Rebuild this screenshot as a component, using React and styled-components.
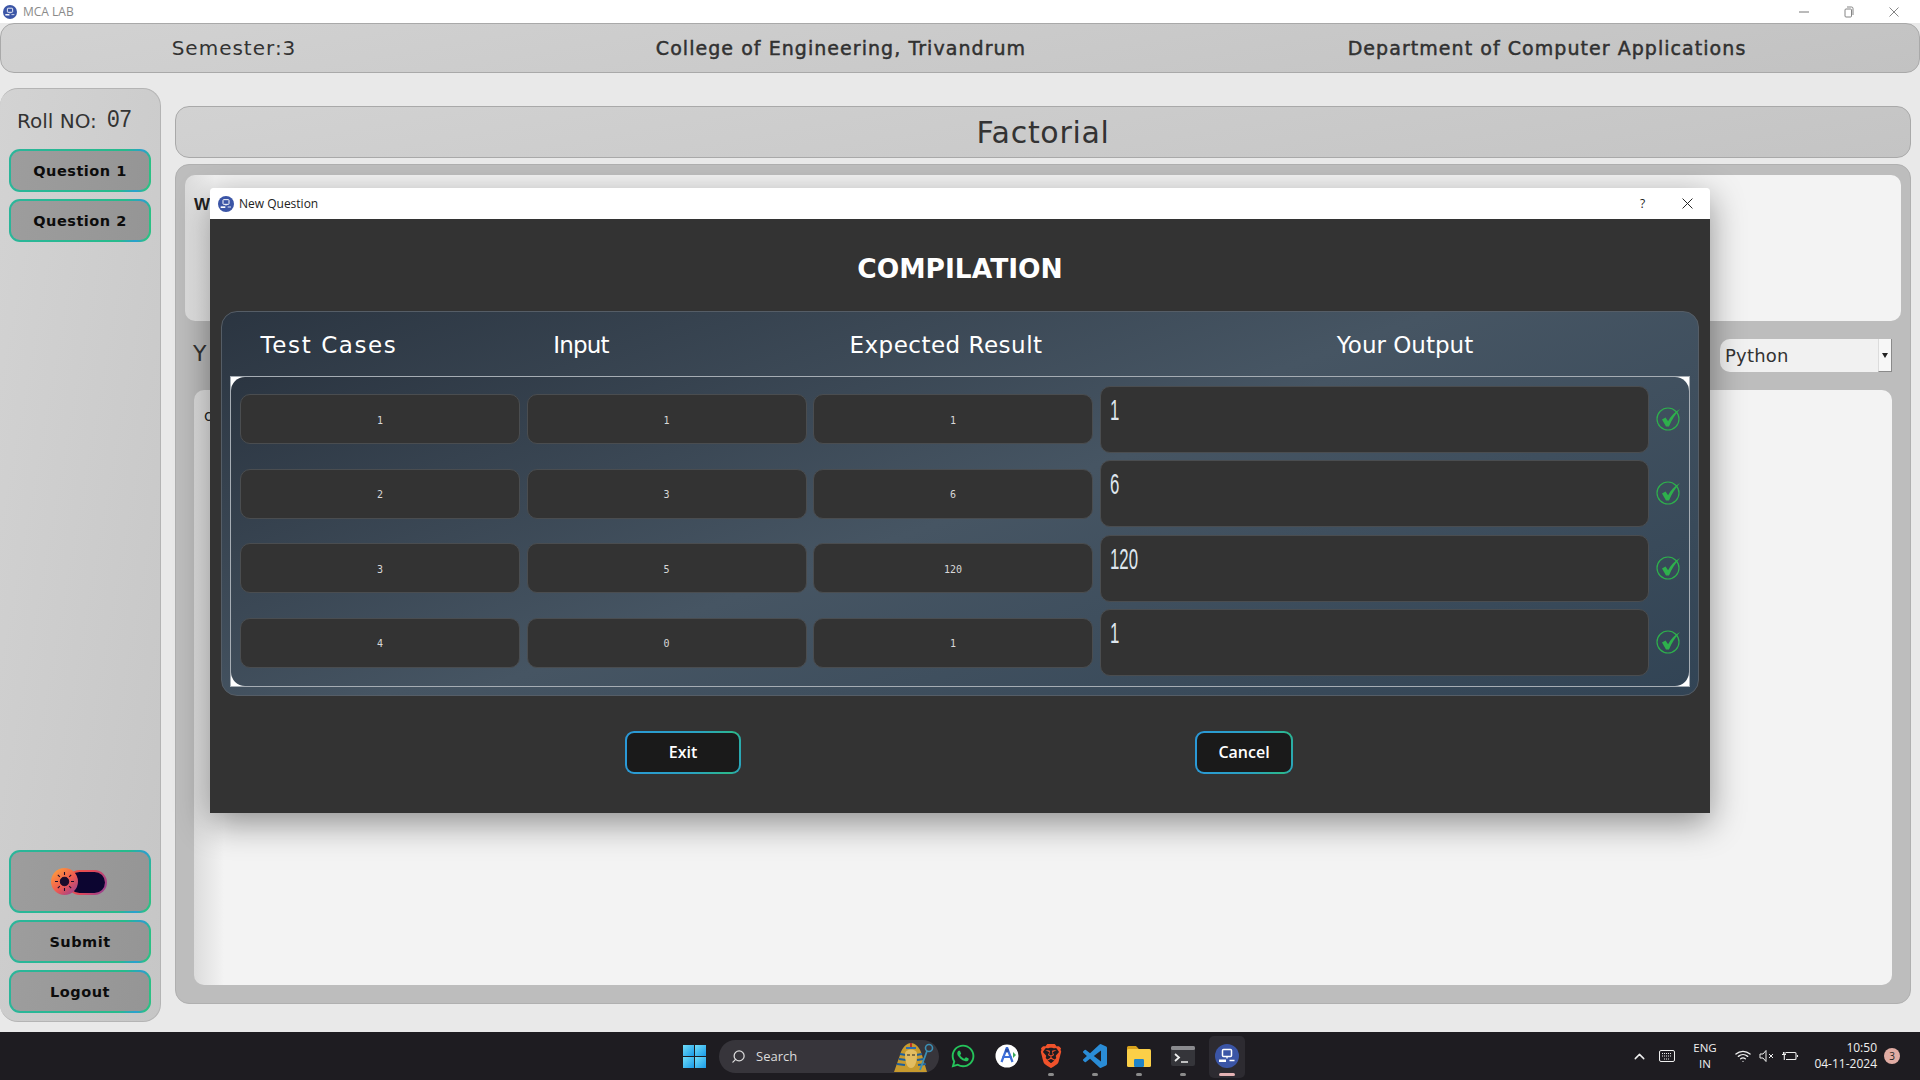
import React from "react";
import styled, { createGlobalStyle } from "styled-components";
import { FaWhatsapp } from "react-icons/fa";
import { SiBrave } from "react-icons/si";
import { FiSearch, FiChevronUp, FiWifi } from "react-icons/fi";

const WIDE = `"DejaVu Sans", "Liberation Sans", sans-serif`;
const UI = `"Open Sans", "Noto Sans", sans-serif`;
const BTN_BORDER = `linear-gradient(100deg, #2bb59a 0%, #27bb8c 78%, #2a9fd0 90%, #2bc084 96%)`;
const BLUE_GRAD = `linear-gradient(160deg, #2b3541 0%, #465563 48%, #324455 100%)`;

const rows = [
  { id: 1, input: 1, expected: 1, output: "1" },
  { id: 2, input: 3, expected: 6, output: "6" },
  { id: 3, input: 5, expected: 120, output: "120" },
  { id: 4, input: 0, expected: 1, output: "1" },
];

const GlobalStyle = createGlobalStyle`
  html, body { margin: 0; padding: 0; background: #e9e9e9; }
  * { box-sizing: border-box; }
`;

const Screen = styled.div`
  position: relative;
  width: 1920px;
  height: 1080px;
  overflow: hidden;
  display: flex;
  flex-direction: column;
  background: #e9e9e9;
  font-family: ${WIDE};
`;

const TitleBar = styled.div`
  height: 23px;
  background: #fff;
  display: flex;
  align-items: center;
  padding-left: 3px;
  font: 12px ${UI};
  color: #8a8a8a;
  gap: 6px;
`;

const WinControls = styled.div`
  margin-left: auto;
  padding-right: 4px;
  display: flex;
  color: #777;
`;

const WinControl = styled.div`
  width: 45px;
  height: 23px;
  display: flex;
  align-items: center;
  justify-content: center;
`;

const Header = styled.div`
  height: 50px;
  display: grid;
  grid-template-columns: 466px 748px 664px;
  align-items: center;
  border: 1px solid #a9a9a9;
  border-radius: 14px;
  background: linear-gradient(170deg, #d2d2d2, #c2c2c2);
  color: #333;
`;

const HeaderText = styled.div`
  text-align: center;
  white-space: nowrap;
  font-size: ${(p) => (p.$strong ? 19 : 20)}px;
  -webkit-text-stroke: ${(p) => (p.$strong ? "0.45px #2b2b2b" : "0")};
  letter-spacing: ${(p) => (p.$strong ? "1.05px" : "1px")};
`;

const Body = styled.div`
  flex: 1;
  display: flex;
  padding-top: 15px;
  min-height: 0;
`;

const Sidebar = styled.div`
  width: 161px;
  height: 934px;
  display: flex;
  flex-direction: column;
  gap: 7px;
  padding: 0 9px 8px;
  border: 1px solid #b4b4b4;
  border-left: 0;
  border-radius: 18px;
  background: linear-gradient(100deg, #d3d3d3, #c6c6c6);
`;

const RollRow = styled.div`
  height: 60px;
  margin-bottom: -7px;
  padding: 3px 0 0 8px;
  display: flex;
  align-items: center;
  gap: 10px;
  color: #333;
  font-size: 20px;
  white-space: nowrap;
`;

const RollDigits = styled.span`
  display: inline-block;
  font: 22px "Liberation Mono", monospace;
  letter-spacing: -1px;
  transform: scaleY(1.15);
`;

const SideButton = styled.div`
  height: ${(p) => p.$h || 43}px;
  margin-top: ${(p) => (p.$push ? "auto" : "0")};
  display: flex;
  align-items: center;
  justify-content: center;
  border: 2px solid transparent;
  border-radius: 11px;
  background: linear-gradient(100deg, #9d9d9d, #959595) padding-box, ${BTN_BORDER} border-box;
  color: #0c0c0c;
  font-size: 14.5px;
  font-weight: bold;
  letter-spacing: 0.5px;
`;

const Toggle = styled.div`
  position: relative;
  width: 56px;
  height: 28px;
  margin-right: 2px;
`;

const ToggleTrack = styled.div`
  position: absolute;
  right: 0;
  top: 2px;
  width: 40px;
  height: 25px;
  border-radius: 13px;
  border: 2px solid transparent;
  background: linear-gradient(#0c0530, #0c0530) padding-box,
    linear-gradient(120deg, #f2553f, #e0485a 50%, #8c3f9a) border-box;
`;

const ToggleKnob = styled.div`
  position: absolute;
  left: 0;
  top: 0;
  width: 27px;
  height: 27px;
  border-radius: 50%;
  display: flex;
  align-items: center;
  justify-content: center;
  background: linear-gradient(140deg, #ff9a3c 10%, #ef5a50 55%, #8c3a9c 100%);
`;

const Content = styled.div`
  flex: 1;
  margin: 18px 9px 28px 14px;
  display: flex;
  flex-direction: column;
  gap: 6px;
  min-width: 0;
`;

const TitlePanel = styled.div`
  height: 52px;
  display: flex;
  align-items: center;
  justify-content: center;
  border: 1px solid #a9a9a9;
  border-radius: 14px;
  background: linear-gradient(170deg, #d2d2d2, #c4c4c4);
  color: #333;
  font-size: 30px;
  letter-spacing: 0.7px;
`;

const MainPanel = styled.div`
  flex: 1;
  display: flex;
  flex-direction: column;
  padding: 10px 9px 18px;
  border: 1px solid #b0b0b0;
  border-radius: 14px;
  background: #bdbdbd;
`;

const QuestionBox = styled.div`
  height: 146px;
  padding: 20px 9px;
  border-radius: 10px;
  background: linear-gradient(90deg, #dcdcdc, #f3f3f3 30px);
  font: bold 17px "Liberation Sans", sans-serif;
  color: #222;
`;

const LangRow = styled.div`
  height: 69px;
  display: flex;
  align-items: center;
  justify-content: space-between;
  padding: 0 9px 0 8px;
  color: #333;
  font-size: 22px;
`;

const LangLabel = styled.span`
  margin-top: -5px;
`;

const Combo = styled.div`
  width: 172px;
  height: 33px;
  display: flex;
  align-items: center;
  justify-content: space-between;
  padding-left: 5px;
  border-radius: 10px 0 0 10px;
  background: #f1f1f1;
  font-size: 18px;
  letter-spacing: 0.2px;
  color: #333;
`;

const ComboArrow = styled.div`
  width: 14px;
  height: 33px;
  display: flex;
  align-items: center;
  justify-content: center;
  background: #f7f7f7;
  border-left: 1px solid #dcdcdc;
  border-right: 1px solid #8a8a8a;
  border-bottom: 1px solid #8a8a8a;
  &::after {
    content: "";
    border: 3.5px solid transparent;
    border-top: 5px solid #222;
    margin-top: 4px;
  }
`;

const Editor = styled.div`
  flex: 1;
  margin: 0 9px;
  padding: 17px 10px;
  border-radius: 10px;
  background: linear-gradient(90deg, #dcdcdc, #f3f3f3 30px);
  font-size: 15px;
  color: #222;
`;

const Dialog = styled.div`
  position: absolute;
  left: 210px;
  top: 188px;
  width: 1500px;
  height: 625px;
  display: flex;
  flex-direction: column;
  border-radius: 4px 4px 0 0;
  box-shadow: 0 10px 34px rgba(0, 0, 0, 0.42);
`;

const DialogBar = styled.div`
  height: 31px;
  display: flex;
  align-items: center;
  gap: 5px;
  padding-left: 8px;
  background: #fff;
  border-radius: 4px 4px 0 0;
  font: 12px ${UI};
  color: #222;
`;

const DialogControls = styled.div`
  margin-left: auto;
  display: flex;
  align-items: center;
  color: #222;
`;

const DialogControl = styled.div`
  width: 45px;
  display: flex;
  justify-content: center;
  align-items: center;
`;

const DialogBody = styled.div`
  flex: 1;
  display: flex;
  flex-direction: column;
  background: #333;
  padding: 0 11px;
`;

const DialogHeading = styled.h1`
  height: 92px;
  margin: 0;
  padding-top: 7px;
  display: flex;
  align-items: center;
  justify-content: center;
  color: #fff;
  font-size: 26.5px;
  font-weight: bold;
`;

const ResultPanel = styled.div`
  height: 385px;
  border: 1px solid #555d66;
  border-radius: 16px;
  padding: 0 8px 8px;
  background: ${BLUE_GRAD};
`;

const ColumnHeads = styled.div`
  height: 64px;
  padding-top: 2px;
  margin-left: -9px;
  display: grid;
  grid-template-columns: 216px 288px 442px 476px;
  align-items: center;
  justify-items: center;
  color: #fff;
  font-size: 23px;
`;

const ColumnHead = styled.span`
  letter-spacing: ${(p) => p.$ls || 0}px;
  white-space: nowrap;
`;

const Frame = styled.div`
  height: 311px;
  border: 1px solid #a6adb4;
  background: #fff;
`;

const FrameInner = styled.div`
  height: 100%;
  padding: 8.5px 9px 0;
  display: grid;
  grid-auto-rows: 67px;
  row-gap: 7.5px;
  border-radius: 14px;
  background: ${BLUE_GRAD};
`;

const Row = styled.div`
  display: grid;
  grid-template-columns: 280px 280px 280px 549px 26px;
  column-gap: 6.5px;
  align-items: center;
`;

const Cell = styled.div`
  height: 50px;
  padding-top: 2px;
  display: flex;
  align-items: center;
  justify-content: center;
  border: 1px solid #4a4d50;
  border-radius: 10px;
  background: #333;
  color: #d8d8d8;
  font: 10px "DejaVu Sans Mono", monospace;
`;

const OutputCell = styled.div`
  height: 67px;
  padding: 5px 9px;
  border: 1px solid #4a4d50;
  border-radius: 10px;
  background: #333;
  color: #dfe6ee;
  font: 30px "Liberation Sans", sans-serif;
  line-height: 36px;
`;

const OutputText = styled.span`
  display: inline-block;
  transform: scaleX(0.56);
  transform-origin: left center;
`;

const CheckSlot = styled.div`
  display: flex;
  justify-content: flex-end;
  margin-top: -2px;
`;

const DialogFooter = styled.div`
  flex: 1;
  display: flex;
  align-items: flex-start;
  padding: 35px 0 0 404px;
  gap: 454px;
`;

const DarkButton = styled.div`
  width: ${(p) => p.$w}px;
  height: 43px;
  padding-bottom: 2px;
  display: flex;
  align-items: center;
  justify-content: center;
  border: 2px solid transparent;
  border-radius: 9px;
  background: linear-gradient(#1a1a1a, #1a1a1a) padding-box,
    linear-gradient(100deg, #2a98d8, #2aa3c0 60%, #2bb88c 90%, #2a9fc8) border-box;
  color: #fff;
  font: 600 16px ${UI};
`;

const Taskbar = styled.div`
  height: 48px;
  flex: none;
  display: flex;
  align-items: center;
  padding-left: 672px;
  background: #1e1c21;
  color: #f0f0f0;
  font-family: ${UI};
`;

const TaskIcon = styled.div`
  position: relative;
  width: 44px;
  height: 48px;
  display: flex;
  align-items: center;
  justify-content: center;
`;

const ActiveTile = styled.div`
  position: absolute;
  left: 4px;
  top: 4px;
  width: 36px;
  height: 42px;
  border-radius: 5px;
  background: #2d2b31;
`;

const RunDot = styled.div`
  position: absolute;
  left: 50%;
  bottom: 4px;
  width: ${(p) => (p.$active ? 16 : 6)}px;
  height: 3px;
  margin-left: ${(p) => (p.$active ? -8 : -3)}px;
  border-radius: 2px;
  background: ${(p) => (p.$active ? "#e5b3b5" : "#8b8b8b")};
`;

const IconFront = styled.div`
  position: relative;
  display: flex;
`;

const SearchPill = styled.div`
  width: 220px;
  height: 33px;
  margin: 0 2px 0 3px;
  display: flex;
  align-items: center;
  padding-left: 12px;
  gap: 10px;
  border-radius: 17px;
  background: #37353b;
  font-size: 13px;
  color: #dcdcdc;
`;

const SearchGlass = styled(FiSearch)`
  transform: scaleX(-1);
`;

const Pharaoh = styled.div`
  margin-left: auto;
  margin-right: 5px;
  display: flex;
`;

const Tray = styled.div`
  margin-left: auto;
  padding-right: 20px;
  display: flex;
  align-items: center;
  font-size: 11.5px;
`;

const TrayItem = styled.div`
  width: ${(p) => p.$w}px;
  display: flex;
  justify-content: center;
`;

const Lang = styled.div`
  width: 48px;
  margin-right: 2px;
  text-align: center;
  line-height: 16px;
`;

const Clock = styled.div`
  width: 76px;
  text-align: right;
  font-size: 12px;
  line-height: 16px;
  white-space: nowrap;
`;

const Badge = styled.div`
  width: 16px;
  height: 16px;
  margin-left: 7px;
  display: flex;
  align-items: center;
  justify-content: center;
  border-radius: 50%;
  background: #e1aca4;
  color: #222;
  font-size: 10px;
`;

const AppLogo = ({ size = 16 }) => (
  <svg width={size} height={size} viewBox="0 0 24 24">
    <circle cx="12" cy="12" r="12" fill="#3b55a6" />
    <rect x="7.5" y="5.5" width="9" height="7" rx="1" fill="none" stroke="#fff" strokeWidth="1.5" />
    <rect x="4" y="15.5" width="7" height="2.5" fill="#fff" />
    <path d="M12 12.5v2M14.5 16.5h5" stroke="#fff" strokeWidth="1.3" />
  </svg>
);

const CheckIcon = () => (
  <svg width="25" height="25" viewBox="0 0 25 25">
    <circle cx="12" cy="13" r="11" fill="none" stroke="#2eb04c" strokeWidth="1.2" />
    <path d="M6 13.5l3.5-2 2.6 3.8C14.5 10.5 18.5 6 24 3c-4.5 5-8.5 11-11 17.5h-3z" fill="#2eb04c" />
  </svg>
);

const SunIcon = () => (
  <svg width="19" height="19" viewBox="0 0 19 19" stroke="#1a0c2c" strokeWidth="1.1">
    <circle cx="9.5" cy="9.5" r="4.2" fill="#1a0c2c" />
    <path d="M9.5 0v3M9.5 16v3M0 9.5h3M16 9.5h3M2.8 2.8l2 2M14.2 14.2l2 2M2.8 16.2l2-2M14.2 4.8l2-2" />
  </svg>
);

const WindowsLogo = () => (
  <svg width="23" height="23" viewBox="0 0 23 23">
    <defs>
      <linearGradient id="winTile" x1="0" y1="0" x2="1" y2="1">
        <stop offset="0" stopColor="#6fdcf8" />
        <stop offset="1" stopColor="#1a9be8" />
      </linearGradient>
    </defs>
    <rect width="11" height="11" fill="url(#winTile)" />
    <rect x="12" width="11" height="11" fill="url(#winTile)" />
    <rect y="12" width="11" height="11" fill="url(#winTile)" />
    <rect x="12" y="12" width="11" height="11" fill="url(#winTile)" />
  </svg>
);

const PharaohIcon = () => (
  <svg width="44" height="32" viewBox="0 0 44 32">
    <path d="M4 32L10 15C12 7 17 3 21 3s9 4 11 12l5 17z" fill="#c79a2e" />
    <path d="M10 14l6 1M9 19l7 1M7 24l8 1M26 15l6-1M27 20l7-1M28 25l8-1" stroke="#1d5f9c" strokeWidth="2" />
    <path d="M15 14c0-6 12-6 12 0 0 8-2 14-6 14s-6-6-6-14z" fill="#e2bd62" />
    <path d="M16 8h10" stroke="#2c6db0" strokeWidth="2" />
    <path d="M20 3h2v4h-2z" fill="#b5342b" />
    <path d="M17 15h3M22 15h3" stroke="#222" strokeWidth="1.2" />
    <circle cx="39" cy="8" r="3.5" fill="none" stroke="#3b8fb5" strokeWidth="1.6" />
    <path d="M37 11L30 30" stroke="#3b8fb5" strokeWidth="1.8" />
  </svg>
);

const StudioIcon = () => (
  <svg width="24" height="26" viewBox="0 0 24 26">
    <circle cx="12" cy="13" r="11.5" fill="#fff" />
    <path d="M12 4.5L6.5 19M12 4.5L17.5 19" stroke="#3e6fd8" strokeWidth="2.2" fill="none" />
    <path d="M7.5 14h9" stroke="#3e6fd8" strokeWidth="2" />
    <circle cx="12" cy="7.5" r="2" fill="#2a4fa8" />
    <path d="M18 9l3 3-3 3z" fill="#3aaa5c" />
  </svg>
);

const VsCodeIcon = () => (
  <svg width="24" height="24" viewBox="0 0 24 24">
    <path
      fill="#2a8cd6"
      d="M23.15 2.587L18.21.21a1.494 1.494 0 0 0-1.705.29l-9.46 8.63-4.12-3.128a.999.999 0 0 0-1.276.057L.327 7.261A1 1 0 0 0 .326 8.74L3.899 12 .326 15.26a1 1 0 0 0 .001 1.479L1.65 17.94a.999.999 0 0 0 1.276.057l4.12-3.128 9.46 8.63a1.492 1.492 0 0 0 1.704.29l4.942-2.377A1.5 1.5 0 0 0 24 20.06V3.939a1.5 1.5 0 0 0-.85-1.352zm-5.146 14.861L10.826 12l7.178-5.448v10.896z"
    />
  </svg>
);

const FolderIcon = () => (
  <svg width="24" height="24" viewBox="0 0 24 24">
    <path d="M0 3.5a1.5 1.5 0 0 1 1.5-1.5H9l2.5 2.5V8H0z" fill="#d9a21c" />
    <rect y="5" width="24" height="18" rx="1.5" fill="#fbcf48" />
    <rect x="7" y="15" width="10" height="8" rx="1.2" fill="#1f84c9" />
  </svg>
);

const TerminalIcon = () => (
  <svg width="24" height="20" viewBox="0 0 24 20">
    <rect width="24" height="20" rx="2" fill="#35353a" />
    <rect width="24" height="4" rx="1.5" fill="#8a8a8e" />
    <path d="M4 8l4 3.5L4 15" stroke="#eee" strokeWidth="1.8" fill="none" />
    <path d="M10 16h7" stroke="#eee" strokeWidth="1.5" />
  </svg>
);

const CloseGlyph = ({ size = 10 }) => (
  <svg width={size} height={size} viewBox="0 0 10 10" stroke="currentColor" strokeWidth="0.9">
    <path d="M0.5 0.5l9 9M9.5 0.5l-9 9" />
  </svg>
);

const taskApps = [
  { key: "whatsapp", icon: <FaWhatsapp size={26} color="#25c45b" /> },
  { key: "studio", icon: <StudioIcon /> },
  { key: "brave", icon: <SiBrave size={24} color="#f0522b" />, running: true },
  { key: "vscode", icon: <VsCodeIcon />, running: true },
  { key: "files", icon: <FolderIcon />, running: true },
  { key: "terminal", icon: <TerminalIcon />, running: true },
  { key: "lab", icon: <AppLogo size={24} />, active: true },
];

const App = () => {
  return (
    <Screen>
      <GlobalStyle />
      <TitleBar>
        <AppLogo size={14} />
        MCA LAB
        <WinControls>
          <WinControl>
            <svg width="10" height="2"><path d="M0 1h10" stroke="currentColor" /></svg>
          </WinControl>
          <WinControl>
            <svg width="10" height="12" viewBox="0 0 10 12" fill="none" stroke="currentColor" strokeWidth="0.9">
              <rect x="1" y="3" width="6.5" height="8" rx="1" />
              <path d="M3 1h4.5a1.5 1.5 0 0 1 1.5 1.5V9" />
            </svg>
          </WinControl>
          <WinControl>
            <CloseGlyph />
          </WinControl>
        </WinControls>
      </TitleBar>

      <Header>
        <HeaderText>Semester:3</HeaderText>
        <HeaderText $strong>College of Engineering, Trivandrum</HeaderText>
        <HeaderText $strong>Department of Computer Applications</HeaderText>
      </Header>

      <Body>
        <Sidebar>
          <RollRow>
            Roll NO: <RollDigits>07</RollDigits>
          </RollRow>
          <SideButton>Question 1</SideButton>
          <SideButton>Question 2</SideButton>
          <SideButton $h={63} $push>
            <Toggle>
              <ToggleTrack />
              <ToggleKnob>
                <SunIcon />
              </ToggleKnob>
            </Toggle>
          </SideButton>
          <SideButton>Submit</SideButton>
          <SideButton>Logout</SideButton>
        </Sidebar>

        <Content>
          <TitlePanel>Factorial</TitlePanel>
          <MainPanel>
            <QuestionBox>W</QuestionBox>
            <LangRow>
              <LangLabel>Y</LangLabel>
              <Combo>
                Python
                <ComboArrow />
              </Combo>
            </LangRow>
            <Editor>c</Editor>
          </MainPanel>
        </Content>
      </Body>

      <Taskbar>
        <TaskIcon>
          <WindowsLogo />
        </TaskIcon>
        <SearchPill>
          <SearchGlass size={15} />
          Search
          <Pharaoh>
            <PharaohIcon />
          </Pharaoh>
        </SearchPill>
        {taskApps.map((app) => (
          <TaskIcon key={app.key}>
            {app.active && <ActiveTile />}
            <IconFront>{app.icon}</IconFront>
            {(app.running || app.active) && <RunDot $active={app.active} />}
          </TaskIcon>
        ))}
        <Tray>
          <TrayItem $w={28}>
            <FiChevronUp size={17} />
          </TrayItem>
          <TrayItem $w={28}>
            <svg width="16" height="12" viewBox="0 0 16 12" fill="none" stroke="#eee" strokeWidth="1">
              <rect x="0.5" y="0.5" width="15" height="11" rx="1.5" />
              <path d="M3 3.5h10M3 6h10M5 9h6" strokeDasharray="1 1" />
            </svg>
          </TrayItem>
          <Lang>
            ENG
            <br />
            IN
          </Lang>
          <TrayItem $w={24}>
            <FiWifi size={16} />
          </TrayItem>
          <TrayItem $w={24}>
            <svg width="16" height="14" viewBox="0 0 16 14" fill="none" stroke="#eee" strokeWidth="1">
              <path d="M1 5h3l3-3.5v11L4 9H1z" />
              <path d="M10 5l4 4M14 5l-4 4" />
            </svg>
          </TrayItem>
          <TrayItem $w={22}>
            <svg width="17" height="12" viewBox="0 0 17 12" fill="none" stroke="#eee" strokeWidth="1.1">
              <path d="M4 2.5h9a1 1 0 0 1 1 1v5a1 1 0 0 1-1 1H4" />
              <path d="M15.5 5v2M0 4.5h4M1.5 2v2.5M3 2v2.5M2.3 4.5V10" />
            </svg>
          </TrayItem>
          <Clock>
            10:50
            <br />
            04-11-2024
          </Clock>
          <Badge>3</Badge>
        </Tray>
      </Taskbar>

      <Dialog>
        <DialogBar>
          <AppLogo size={16} />
          New Question
          <DialogControls>
            <DialogControl>?</DialogControl>
            <DialogControl>
              <CloseGlyph size={11} />
            </DialogControl>
          </DialogControls>
        </DialogBar>
        <DialogBody>
          <DialogHeading>COMPILATION</DialogHeading>
          <ResultPanel>
            <ColumnHeads>
              <ColumnHead $ls={1.6}>Test Cases</ColumnHead>
              <ColumnHead $ls={-0.8}>Input</ColumnHead>
              <ColumnHead $ls={0.5}>Expected Result</ColumnHead>
              <ColumnHead>Your Output</ColumnHead>
            </ColumnHeads>
            <Frame>
              <FrameInner>
                {rows.map((row) => (
                  <Row key={row.id}>
                    <Cell>{row.id}</Cell>
                    <Cell>{row.input}</Cell>
                    <Cell>{row.expected}</Cell>
                    <OutputCell>
                      <OutputText>{row.output}</OutputText>
                    </OutputCell>
                    <CheckSlot>
                      <CheckIcon />
                    </CheckSlot>
                  </Row>
                ))}
              </FrameInner>
            </Frame>
          </ResultPanel>
          <DialogFooter>
            <DarkButton $w={116}>Exit</DarkButton>
            <DarkButton $w={98}>Cancel</DarkButton>
          </DialogFooter>
        </DialogBody>
      </Dialog>
    </Screen>
  );
};

export default App;
